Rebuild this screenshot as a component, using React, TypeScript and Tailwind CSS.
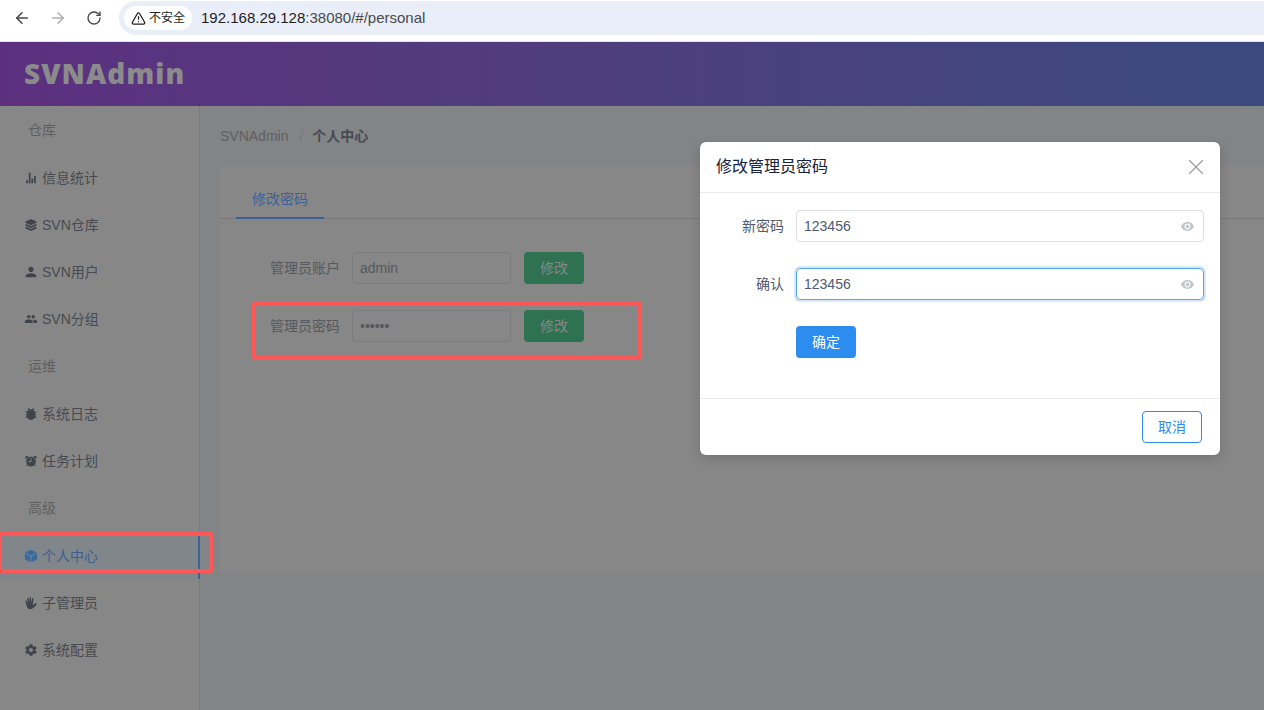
import React from 'react';
import { ArrowLeft, ArrowRight, RotateCw, TriangleAlert, X } from 'lucide-react';
import { IoMdStats, IoMdPerson, IoMdPeople, IoMdBug, IoMdCube, IoMdHand, IoMdSettings, IoMdEye } from 'react-icons/io';
import { IoLayers, IoAlarm } from 'react-icons/io5';

const font = "font-['Liberation_Sans','Noto_Sans_CJK_SC',sans-serif]";

const Group = ({ label }: { label: string }) => (
    <div className="h-[47.2px] pl-[28px] pb-px flex items-center text-sm text-[#5f5f5f]">{label}</div>
);

const Item = ({ icon, label, active }: { icon: React.ReactNode; label: string; active?: boolean }) => (
    <div className={active
        ? "h-[47.2px] pl-[25px] flex items-center gap-[5px] text-sm text-[#3a5f92] bg-[#81868a] border-r-2 border-[#3a6397] -mr-px"
        : "h-[47.2px] pl-[25px] flex items-center gap-[5px] text-sm text-[#474a50]"}>
        <span className={active
            ? "w-3 flex justify-center text-[14px] text-[#3a6a9e] [&>svg]:shrink-0"
            : "w-3 flex justify-center text-[14px] text-[#3f434b] [&>svg]:shrink-0"}>{icon}</span>
        {label}
    </div>
);

const FormRow = ({ label, value }: { label: string; value: string }) => (
    <div className="flex items-center h-8">
        <div className="w-[82px] pr-3 text-right text-sm text-[#55585e] whitespace-nowrap">{label}</div>
        <div className="w-[159px] h-8 border border-[#7b7c7e] rounded-[4px] pl-[7px] flex items-center text-sm text-[#55585e]">{value}</div>
        <div className="ml-[13px] w-[60px] h-8 rounded-[4px] bg-[#2f7252] flex items-center justify-center text-sm text-[#878787]">修改</div>
    </div>
);

const DialogInput = ({ label, value, focus }: { label: string; value: string; focus?: boolean }) => (
    <div className="flex items-center h-8">
        <div className="w-[96px] pr-3 text-right text-sm text-[#515a6e]">{label}</div>
        <div className={focus
            ? "w-[408px] h-8 rounded-[4px] border border-[#57a3f3] shadow-[0_0_0_2px_rgba(45,140,240,0.2)] pl-[7px] pr-[8px] flex items-center justify-between text-sm text-[#515a6e]"
            : "w-[408px] h-8 rounded-[4px] border border-[#dcdee2] pl-[7px] pr-[8px] flex items-center justify-between text-sm text-[#515a6e]"}>
            {value}
            <IoMdEye className="text-[#c0c4cc] text-[15px] shrink-0" />
        </div>
    </div>
);

export default function App() {
    return (
        <div className={`${font} relative w-[1264px] h-[710px] overflow-hidden bg-[#828486]`}>
            {/* browser chrome */}
            <div className="h-[42px] bg-white flex items-start border-b border-[#e5e5e5]">
                <div className="flex items-center h-9 pl-[13px] gap-[18px] text-[#474747]">
                    <ArrowLeft size={18} strokeWidth={2} />
                    <ArrowRight size={18} strokeWidth={2} className="text-[#b0b0b0]" />
                    <RotateCw size={16} strokeWidth={2} className="ml-[1px]" />
                </div>
                <div className="ml-[17px] mt-px flex-1 h-[34px] bg-[#e9eef8] rounded-l-full flex items-center pl-[5px]">
                    <div className="h-6 w-[68px] bg-white rounded-full flex items-center justify-center gap-[3px] text-xs text-[#1f1f1f]">
                        <TriangleAlert size={15} strokeWidth={2} />
                        不安全
                    </div>
                    <div className="ml-[9px] text-[15px] text-[#1f1f1f]">192.168.29.128<span className="text-[#4a4a4a]">:38080/#/personal</span></div>
                </div>
            </div>

            {/* header */}
            <div className="h-[64px] bg-gradient-to-r from-[#5c307f] to-[#3a4a7e] flex items-center pl-6 pb-[2px]">
                <span className="font-['Open_Sans',sans-serif] font-extrabold text-[28px] tracking-[1px] text-[#8b8b8b]">SVNAdmin</span>
            </div>

            <div className="flex h-[604px]">
                <div className="w-[200px] shrink-0 bg-[#878787] border-r border-[#797b7f] pt-px">
                    <Group label="仓库" />
                    <Item icon={<IoMdStats />} label="信息统计" />
                    <Item icon={<IoLayers />} label="SVN仓库" />
                    <Item icon={<IoMdPerson />} label="SVN用户" />
                    <Item icon={<IoMdPeople />} label="SVN分组" />
                    <Group label="运维" />
                    <Item icon={<IoMdBug />} label="系统日志" />
                    <Item icon={<IoAlarm />} label="任务计划" />
                    <Group label="高级" />
                    <div className="h-[0.5px]" />
                    <Item active icon={<IoMdCube />} label="个人中心" />
                    <Item icon={<IoMdHand />} label="子管理员" />
                    <Item icon={<IoMdSettings />} label="系统配置" />
                </div>
                <div className="flex-1 pl-5">
                    <div className="h-[60px] flex items-center text-sm">
                        <span className="text-[#606060]">SVNAdmin</span>
                        <span className="ml-[11px] mr-[9px] text-[#777]">/</span>
                        <span className="font-bold text-[#474a50]">个人中心</span>
                    </div>
                    <div className="h-[406px] bg-[#878787] pt-[15px]">
                        <div className="h-[38px] border-b border-[#787878] pl-4 flex">
                            <div className="w-[88px] h-[38px] border-b-2 border-[#3a6397] flex items-center justify-center text-sm text-[#3a6397]">修改密码</div>
                        </div>
                        <div className="pl-[50px] pt-[33px] flex flex-col gap-[26px]">
                            <FormRow label="管理员账户" value="admin" />
                            <FormRow label="管理员密码" value="••••••" />
                        </div>
                    </div>
                </div>
            </div>

            {/* annotations */}
            <div className="absolute left-[-2px] top-[532px] w-[215px] h-[41px] border-[4px] border-[#ff5757] rounded-[2px]" />
            <div className="absolute left-[252px] top-[302px] w-[390px] h-[57px] border-[4px] border-[#ff5757] rounded-[2px]" />

            {/* dialog */}
            <div className="absolute left-[700px] top-[142px] w-[520px] h-[313px] bg-white rounded-md flex flex-col shadow-[0_4px_12px_rgba(0,0,0,0.15)]">
                <div className="h-[51px] border-b border-[#e8eaec] pl-4 pr-[11px] flex items-center justify-between">
                    <span className="text-base text-[#17233d]">修改管理员密码</span>
                    <X size={26} strokeWidth={1} className="text-[#999]" />
                </div>
                <div className="h-[206px] border-b border-[#e8eaec] pt-[17px]">
                    <div className="flex flex-col gap-[26px]">
                        <DialogInput label="新密码" value="123456" />
                        <DialogInput label="确认" value="123456" focus />
                    </div>
                    <div className="ml-[96px] mt-[26px] w-[60px] h-8 rounded-[4px] bg-[#2d8cf0] text-white text-sm flex items-center justify-center">确定</div>
                </div>
                <div className="flex-1 flex items-start justify-end pt-3 pr-[18px]">
                    <div className="w-[60px] h-8 rounded-[4px] border border-[#2d8cf0] text-[#2d8cf0] text-sm flex items-center justify-center">取消</div>
                </div>
            </div>
        </div>
    );
}
